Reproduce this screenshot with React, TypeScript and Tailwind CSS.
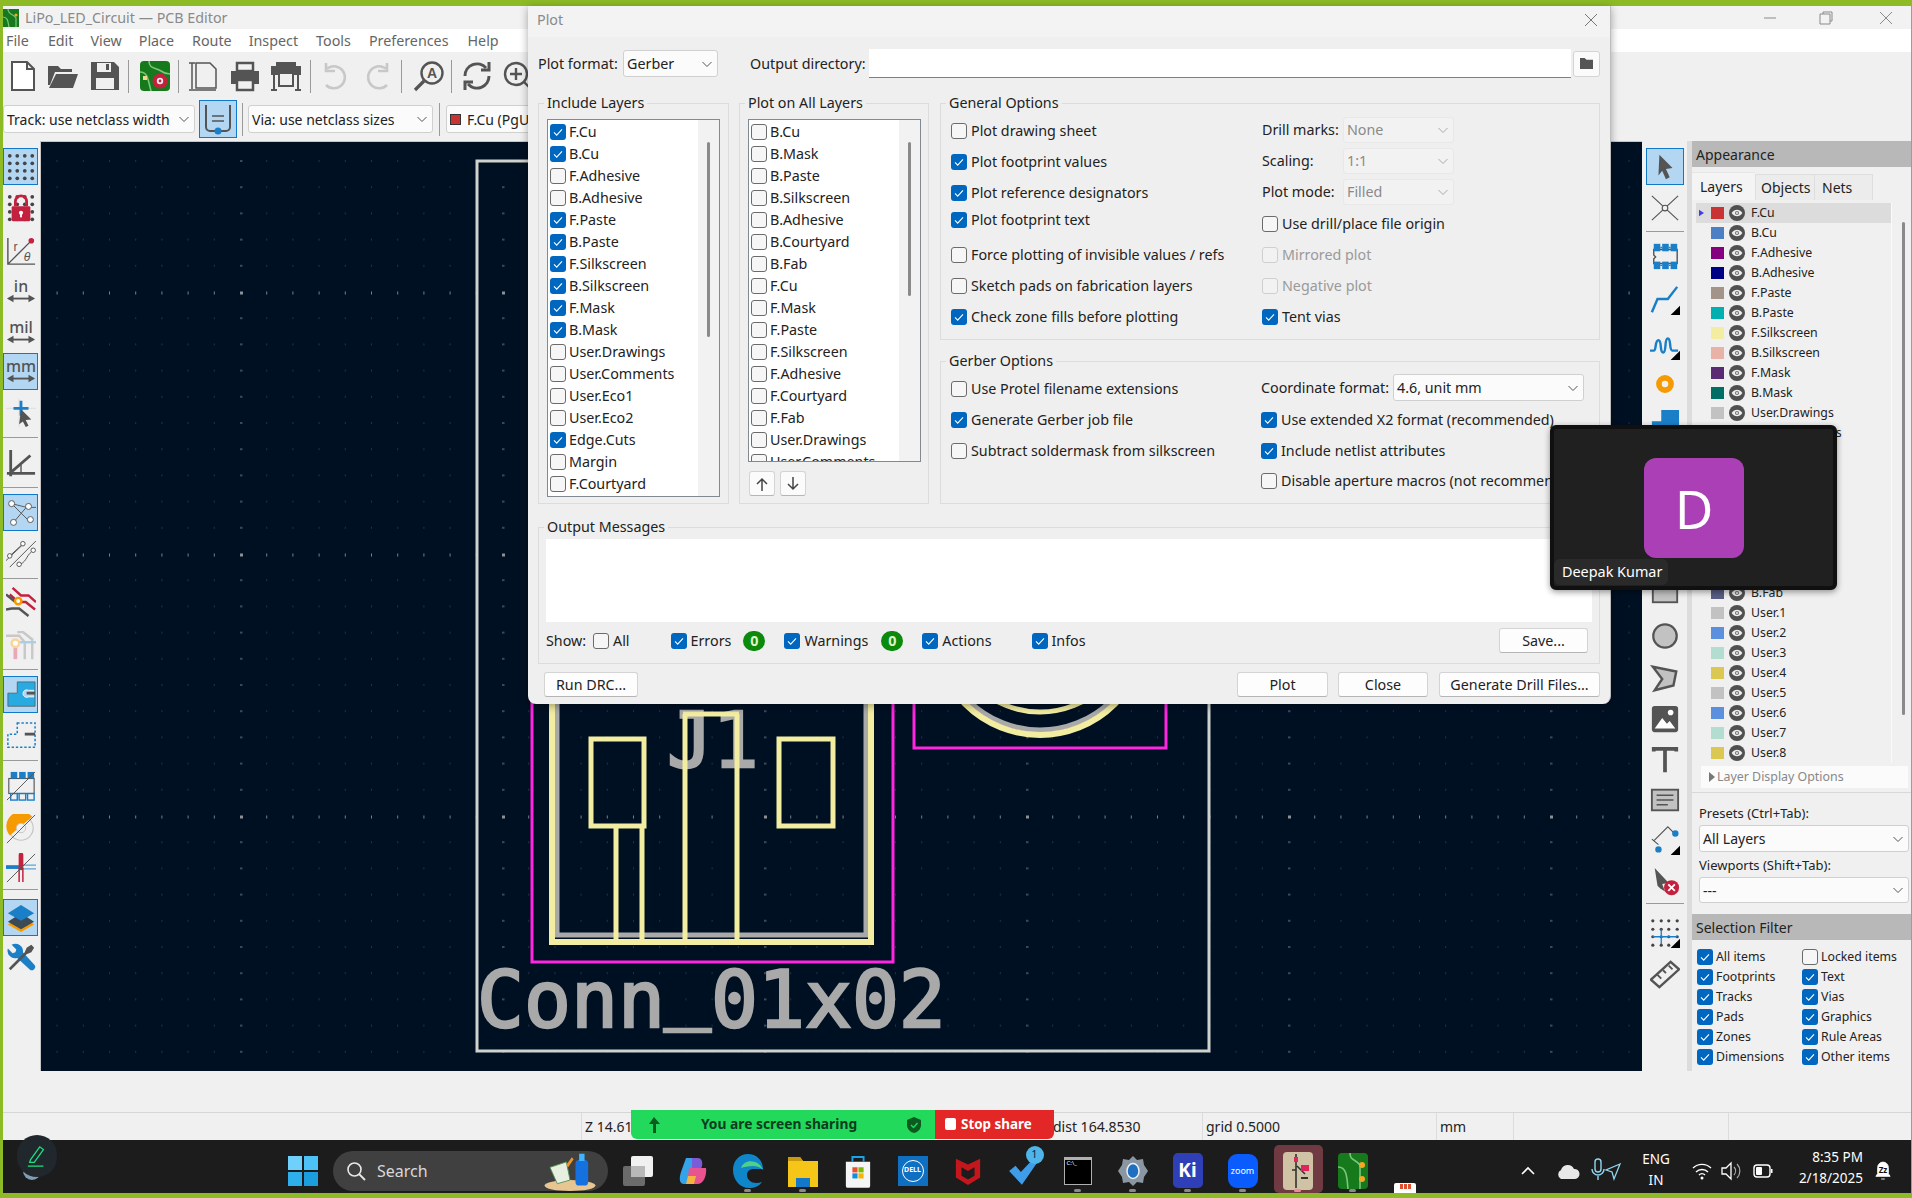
import React from "react";

const G = "#545454";
const B = "#1a7fc7";

function Check() {
  return (
    <svg viewBox="0 0 16 16" className="w-[16px] h-[16px]">
      <path d="M4 8.4l2.7 2.7L12 5.4" fill="none" stroke="#fff" strokeWidth="1.1" />
    </svg>
  );
}

function Cb({ on = false, off = false }: { on?: boolean; off?: boolean }) {
  if (on)
    return (
      <span className="w-[16px] h-[16px] rounded-[3px] bg-[#0067c0] shrink-0 block">
        <Check />
      </span>
    );
  return (
    <span
      className={
        off
          ? "w-[16px] h-[16px] rounded-[3px] border border-[#cfcfcf] bg-[#f2f2f2] shrink-0 block"
          : "w-[16px] h-[16px] rounded-[3px] border border-[#6b6b6b] bg-[#f6f6f6] shrink-0 block"
      }
    />
  );
}

function Opt({ label, on, off, cls = "" }: { label: string; on?: boolean; off?: boolean; cls?: string }) {
  return (
    <div className={"flex items-center h-[18px] gap-[4px] whitespace-nowrap " + cls}>
      <Cb on={on} off={off} />
      <span className={off ? "text-[#9a9a9a]" : "text-[#222]"}>{label}</span>
    </div>
  );
}

function Chev({ c = "#555" }: { c?: string }) {
  return (
    <svg viewBox="0 0 12 12" className="w-[12px] h-[12px] shrink-0">
      <path d="M1.5 4l4.5 4.5L10.5 4" fill="none" stroke={c} strokeWidth="1" />
    </svg>
  );
}

function Select({ text, cls, off }: { text: React.ReactNode; cls: string; off?: boolean }) {
  return (
    <div
      className={
        "flex items-center justify-between pl-[3px] pr-[4px] rounded-[3px] border shrink-0 whitespace-nowrap overflow-hidden " +
        (off ? "border-[#e8e8e8] bg-[#f2f2f2] text-[#8a8a8a] " : "border-[#d0d0d0] bg-[#fbfbfb] text-[#222] ") +
        cls
      }
    >
      <span className="flex items-center gap-[6px]">{text}</span>
      <Chev c={off ? "#aaa" : "#555"} />
    </div>
  );
}

function Btn({ label, cls }: { label: string; cls: string }) {
  return (
    <div
      className={
        "flex items-center justify-center h-[25px] rounded-[3px] border border-[#d4d4d4] border-b-[#b5b5b5] bg-[#fdfdfd] text-[#222] shrink-0 whitespace-nowrap " +
        cls
      }
    >
      {label}
    </div>
  );
}

function Group({ title, cls, children }: { title: string; cls: string; children: React.ReactNode }) {
  return (
    <div className={"relative border border-[#dcdcdc] shrink-0 " + cls}>
      <span className="absolute left-[5px] top-[-10px] px-[3px] bg-[#efefef] text-[#222] whitespace-nowrap">{title}</span>
      {children}
    </div>
  );
}

const inc: [string, boolean][] = [
  ["F.Cu", true], ["B.Cu", true], ["F.Adhesive", false], ["B.Adhesive", false], ["F.Paste", true], ["B.Paste", true],
  ["F.Silkscreen", true], ["B.Silkscreen", true], ["F.Mask", true], ["B.Mask", true], ["User.Drawings", false],
  ["User.Comments", false], ["User.Eco1", false], ["User.Eco2", false], ["Edge.Cuts", true], ["Margin", false], ["F.Courtyard", false],
];
const all = ["B.Cu", "B.Mask", "B.Paste", "B.Silkscreen", "B.Adhesive", "B.Courtyard", "B.Fab", "F.Cu", "F.Mask", "F.Paste", "F.Silkscreen", "F.Adhesive", "F.Courtyard", "F.Fab", "User.Drawings", "User.Comments"];

const layers: [string, string][] = [
  ["F.Cu", "#c83434"], ["B.Cu", "#4d7fc4"], ["F.Adhesive", "#84007f"], ["B.Adhesive", "#000084"], ["F.Paste", "#a29489"],
  ["B.Paste", "#00b0b0"], ["F.Silkscreen", "#f2eda1"], ["B.Silkscreen", "#e8b2a7"], ["F.Mask", "#5a2a72"], ["B.Mask", "#006e64"],
  ["User.Drawings", "#c2c2c2"], ["User.Comments", "#597ed1"], ["User.Eco1", "#b2ddd0"], ["User.Eco2", "#dbc852"], ["Edge.Cuts", "#d0d2cd"],
  ["Margin", "#ff26e2"], ["F.Courtyard", "#ff26e2"], ["B.Courtyard", "#26e9ff"], ["F.Fab", "#afafaf"], ["B.Fab", "#585d84"],
  ["User.1", "#c2c2c2"], ["User.2", "#5a90dd"], ["User.3", "#b2ddd0"], ["User.4", "#dbc852"], ["User.5", "#c2c2c2"],
  ["User.6", "#5a90dd"], ["User.7", "#b2ddd0"], ["User.8", "#dbc852"],
];

function Eye() {
  return (
    <svg viewBox="0 0 16 16" className="w-[16px] h-[16px] shrink-0">
      <circle cx="8" cy="8" r="8" fill="#505050" />
      <path d="M2.6 8C4.2 5.6 6 4.8 8 4.8s3.8.8 5.4 3.2C11.8 10.4 10 11.2 8 11.2S4.2 10.4 2.6 8z" fill="#eee" />
      <circle cx="8" cy="8" r="2.1" fill="#777" />
      <circle cx="8" cy="8" r="1" fill="#eee" />
    </svg>
  );
}

function I({ children, s = 32 }: { children: React.ReactNode; s?: number }) {
  return (
    <svg viewBox="0 0 32 32" width={s} height={s} className="shrink-0 block">
      {children}
    </svg>
  );
}

const Sep = () => <div className="w-[1px] h-[33px] bg-[#9a9a9a] shrink-0" />;

const iNew = <path d="M5 2h15l7 7v21H5z M20 2v7h7" fill="#fff" stroke={G} strokeWidth="2" />;
const iOpen = (
  <g fill={G}>
    <path d="M1 6h10l3 3h11v3H8L3 25H1z" />
    <path d="M9 14h22l-5 14H2z" />
  </g>
);
const iSave = (
  <g>
    <path d="M2 2h23l5 5v23H2z" fill={G} />
    <rect x="8" y="3" width="14" height="9" fill="#f0f0f0" />
    <rect x="17" y="4" width="3" height="6" fill={G} />
    <rect x="7" y="18" width="18" height="11" fill="#f0f0f0" />
  </g>
);
const iBoard = (
  <g>
    <rect x="1" y="1" width="30" height="30" rx="4" fill="#167a1c" />
    <path d="M10 1c0 8 6 6 12 10 4 3 6 3 9 3M1 12c8 0 8 8 11 19" fill="none" stroke="#7cc47f" strokeWidth="1.6" />
    <rect x="4" y="16" width="4" height="4" fill="#f5d58a" />
    <circle cx="21" cy="21" r="7.5" fill="#c4213f" />
    <circle cx="21" cy="21" r="3.2" fill="#eee" />
    <circle cx="21" cy="21" r="1.4" fill="#c4213f" />
  </g>
);
const iPage = (
  <g fill="#f0f0f0" stroke={G} strokeWidth="1.5">
    <path d="M9 3h14l6 6v19H9z" />
    <path d="M5 3v26M2 3h6M2 30h27" />
  </g>
);
const iPrint = (
  <g>
    <path d="M8 3h16v8H8z" fill="none" stroke={G} strokeWidth="2.5" />
    <path d="M2 11h28v13h-5v-5H7v5H2z" fill={G} />
    <path d="M8 20h16v10H8z" fill="#f0f0f0" stroke={G} strokeWidth="2.5" />
  </g>
);
const iPlot = (
  <g>
    <rect x="1" y="6" width="30" height="9" fill={G} />
    <rect x="6" y="2" width="20" height="4" fill={G} />
    <path d="M9 13h14v13H9z" fill="#f0f0f0" stroke={G} strokeWidth="2" />
    <path d="M4 15v15M28 15v15M1 30h6M25 30h6" stroke={G} strokeWidth="2" />
  </g>
);
const iUndo = <path d="M8 8h1A11 11 0 1 1 7 25M7 3v8h9" fill="none" stroke="#c8c8c8" strokeWidth="2.6" />;
const iRedo = <path d="M24 8h-1A11 11 0 1 0 25 25M25 3v8h-9" fill="none" stroke="#c8c8c8" strokeWidth="2.6" />;
const iSearch = (
  <g>
    <circle cx="19" cy="13" r="10.5" fill="none" stroke={G} strokeWidth="2.4" />
    <path d="M11 21L2 30" stroke={G} strokeWidth="3.2" />
    <text x="19" y="18" textAnchor="middle" fontSize="14" fontWeight="700" fill={G} fontFamily="'Liberation Sans',sans-serif">A</text>
  </g>
);
const iRefresh = (
  <g fill="none" stroke={G} strokeWidth="3">
    <path d="M4 16A12 12 0 0 1 25 8" />
    <path d="M28 16A12 12 0 0 1 7 24" />
    <path d="M28 2v8h-8M4 30v-8h8" />
  </g>
);
const iZoom = (
  <g fill="none" stroke={G} strokeWidth="2.4">
    <circle cx="14" cy="14" r="11" />
    <path d="M14 8v12M8 14h12M22 22l8 8" />
  </g>
);
const iDots = (
  <g fill="#454545">
    {[4, 12, 20, 28].map((y) => [4, 12, 20, 28].map((x) => <circle key={x + "-" + y} cx={x} cy={y} r="2" />))}
  </g>
);
const iLock = (
  <g>
    {iDots}
    <rect x="6" y="14" width="20" height="16" rx="1.5" fill="#c4213f" />
    <path d="M10 14V9a6 6 0 0 1 12 0v5" fill="none" stroke="#c4213f" strokeWidth="3" />
    <circle cx="16" cy="21" r="2.2" fill="#fff" />
    <rect x="15" y="21" width="2" height="5" fill="#fff" />
  </g>
);
const iPolar = (
  <g>
    <path d="M2 2v28h29M2 30L26 6" fill="none" stroke={G} strokeWidth="1.5" />
    <circle cx="27" cy="5" r="3" fill="#c4213f" />
    <text x="8" y="16" fontSize="13" fill={G} fontFamily="'Liberation Sans',sans-serif">r</text>
    <text x="19" y="27" fontSize="13" fontStyle="italic" fill={G} fontFamily="'Liberation Sans',sans-serif">θ</text>
  </g>
);
const unit = (u: string, fs: number) => (
  <g>
    <text x="16" y="16" textAnchor="middle" fontSize={fs} fontWeight="500" fill={G} fontFamily="'Noto Sans',sans-serif">{u}</text>
    <path d="M3 23h26" stroke={G} strokeWidth="2" />
    <path d="M1 23l7-4v8zM31 23l-7-4v8z" fill={G} />
  </g>
);
const iCursor = (
  <g>
    <path d="M14 1v30M0 11h32" stroke="#ddd" strokeWidth="1" />
    <path d="M8 11h16M16 3v16" stroke={B} strokeWidth="3" />
    <path d="M16 12l11 11-6 .5 3 6-3 1.5-3-6-4 3z" fill={G} />
  </g>
);
const iAngle = (
  <g fill="none" stroke={G} strokeWidth="3">
    <path d="M5 2v28M1 27h30M4 27L26 8" />
    <path d="M16 27v-9" strokeWidth="1.5" />
  </g>
);
const iNet = (
  <g stroke={G} strokeWidth="1" fill="#fff">
    <path d="M6 6l20 5M25 6L8 26M6 6l19 19M26 10h6" fill="none" />
    <circle cx="6" cy="6" r="3.2" />
    <circle cx="24" cy="9" r="3.2" />
    <circle cx="8" cy="26" r="3.2" />
    <circle cx="26" cy="23" r="3.2" />
  </g>
);
const iCurved = (
  <g fill="none" stroke={G} strokeWidth="1">
    <path d="M0 23L20 4M4 30L32 2" />
    <path d="M3 19l13-12M13 27c8 0 9-10 14-13" />
    <circle cx="4" cy="18" r="2.4" fill="#fff" />
    <circle cx="18" cy="5" r="2.4" fill="#fff" />
    <circle cx="14" cy="27" r="2.4" fill="#fff" />
    <circle cx="29" cy="12" r="2.4" fill="#fff" />
  </g>
);
const iTracks = (
  <g fill="none" strokeWidth="2.6">
    <path d="M7 1l9 8h8l8 7M4 8l9 8h8l10 8" stroke="#c4213f" />
    <path d="M0 8l10 8M0 24l6-1h8l10 8" stroke={G} />
    <circle cx="13" cy="15" r="3.4" stroke="#f59a00" fill="#fff" />
  </g>
);
const iTracks2 = (
  <g fill="none" strokeWidth="2.6">
    <path d="M0 5h14l6 7v18M12 1h6l10 8v21" stroke="#c8c8c8" />
    <path d="M10 12h22" stroke="#a8cfe8" />
    <path d="M10 16v14" stroke="#e8a9b5" strokeWidth="4" />
    <circle cx="10" cy="13" r="4" stroke="#fbd49a" fill="#fff" />
  </g>
);
const iZone = (
  <g>
    <path d="M12 2h19v26H2V14h10z" fill="#29abe2" stroke={G} strokeWidth="0.8" />
    <path d="M30 11h-6a4 4 0 1 0 0 7h6" fill="#b3d7f3" stroke="#e8f3fb" strokeWidth="1" />
    <path d="M22 14h9" stroke={G} strokeWidth="3" />
  </g>
);
const iZoneD = (
  <g>
    <path d="M12 2h19v26H2V14h10z" fill="none" stroke={B} strokeWidth="1.6" strokeDasharray="2.5 2" />
    <path d="M20 14h11" stroke={G} strokeWidth="3" />
  </g>
);
const fp = (
  <g>
    <path d="M4 9h25v15H4v-5l2-2-2-2z" fill="none" stroke={G} strokeWidth="1.5" />
    {[4, 13, 22].map((x) => <rect key={x} x={x} y="3" width="7" height="8" fill="#1a7fc7" />)}
    {[4, 13, 22].map((x) => <rect key={x} x={x} y="22" width="7" height="8" fill="#1a7fc7" />)}
    <path d="M11 7h2M20 7h2M11 26h2M20 26h2" stroke="#1a7fc7" strokeWidth="1.5" />
  </g>
);
const iFpOff = (
  <g>
    <rect x="3" y="8" width="27" height="16" fill="none" stroke={G} strokeWidth="1.2" />
    {[5, 14, 23].map((x) => <rect key={x} x={x} y="1" width="7" height="7" fill="#1a7fc7" />)}
    {[5, 14, 23].map((x) => <rect key={x} x={x} y="24" width="7" height="7" fill="none" stroke="#1a7fc7" strokeWidth="1.5" />)}
    <path d="M1 31L31 1" stroke={G} strokeWidth="1" />
  </g>
);
const iViaOff = (
  <g>
    <circle cx="16" cy="15" r="13" fill="#f0f0f0" stroke="#c4c4c4" strokeWidth="1.2" />
    <path d="M28 3A13 13 0 0 0 4 23z" fill="#f59a00" />
    <circle cx="16" cy="15" r="5" fill="#f0f0f0" stroke="#c4c4c4" />
    <path d="M1 31L31 1" stroke={G} strokeWidth="1" />
  </g>
);
const iTrkOff = (
  <g>
    <path d="M0 15h16" stroke="#1a7fc7" strokeWidth="4" />
    <path d="M16 13h16M16 17h16" stroke="#5aa5d8" strokeWidth="1.4" />
    <path d="M16 2v14" stroke="#c4213f" strokeWidth="5" strokeLinecap="round" />
    <path d="M14 16v15M18 16v15" stroke="#c4213f" strokeWidth="1.6" />
    <path d="M1 31L31 1" stroke={G} strokeWidth="1" />
  </g>
);
const iLayers = (
  <g>
    <path d="M16 17l14 9-14 8-14-8z" fill="#f59a00" transform="translate(0 -3)" />
    <path d="M16 11l14 9-14 8-14-8z" fill="#3c4a55" />
    <path d="M16 2l14 9-14 8-14-8z" fill="#1a7fc7" />
  </g>
);
const iTools = (
  <g>
    <path d="M6 3l5 5-1 3-3 1-5-5a8 8 0 0 0 10 10L25 29a3 3 0 0 0 5-5L18 11A8 8 0 0 0 6 3z" fill="#1a7fc7" />
    <path d="M30 6l-3-3-5 3-2 5-17 17 2 2 17-17 5-2z" fill={G} />
  </g>
);
const corner = (k: React.ReactNode) => (
  <g>
    {k}
    <path d="M32 32H22l10-10z" fill="#000" />
  </g>
);
const iSel = <path d="M10 3l14 14-7 1 4 9-4 2-4-9-4 5z" fill={G} />;
const iCross = (
  <g fill="none" stroke={G} strokeWidth="1.2">
    <path d="M2 3l28 26M30 3L2 29" />
    <circle cx="16" cy="16" r="3" fill="#f0f0f0" />
  </g>
);
const iTrack = corner(<path d="M2 29l6-14h11L29 2" fill="none" stroke="#1a7fc7" strokeWidth="2.6" />);
const iTune = corner(
  <path d="M0 22h4c3 0 1-11 5-11s1 13 5 13 1-15 5-15 1 13 5 13h6" fill="none" stroke="#1a7fc7" strokeWidth="2.6" />
);
const iVia = <circle cx="16" cy="16" r="6.5" fill="none" stroke="#f59a00" strokeWidth="6" />;
const iRect = <rect x="3" y="4" width="26" height="24" fill="#c2c2c2" stroke={G} strokeWidth="2" />;
const iCircle = <circle cx="16" cy="16" r="12.5" fill="#c2c2c2" stroke={G} strokeWidth="2.4" />;
const iPoly = <path d="M3 4l25 5-3 15-20 5 8-12z" fill="#c2c2c2" stroke={G} strokeWidth="2.6" />;
const iImage = (
  <g>
    <rect x="2" y="2" width="28" height="28" rx="3" fill={G} />
    <circle cx="22" cy="9" r="3" fill="#fff" />
    <path d="M5 26l8-11 5 6 3-3 6 8z" fill="#fff" />
  </g>
);
const iText = <path d="M4 7V4h24v3M16 4v25" fill="none" stroke={G} strokeWidth="4" />;
const iTextbox = (
  <g>
    <rect x="2" y="5" width="28" height="22" fill="#c2c2c2" stroke={G} strokeWidth="2" />
    <path d="M7 11h18M7 16h18M7 21h12" stroke={G} strokeWidth="1.5" />
  </g>
);
const iLine = corner(
  <g>
    <path d="M4 17L19 2l7 7M2 15l7 6" fill="none" stroke={G} strokeWidth="1.2" />
    <circle cx="27" cy="9" r="3.4" fill="#1a7fc7" />
    <circle cx="9" cy="26" r="3.4" fill="#1a7fc7" />
  </g>
);
const iDel = (
  <g>
    <path d="M5 1l15 16-7 1 3 8-5-3-3-3z" fill={G} />
    <circle cx="23" cy="22" r="8" fill="#c4213f" />
    <path d="M19.5 18.5l7 7M26.5 18.5l-7 7" stroke="#fff" strokeWidth="2" />
  </g>
);
const iGrid = corner(
  <g>
    <g fill="#454545">
      {[3, 12, 20, 29].map((y) => [3, 12, 20, 29].map((x) => <circle key={x + "-" + y} cx={x} cy={y} r="1.7" />))}
    </g>
    <path d="M3 20h26M12 12v16" stroke="#1a7fc7" strokeWidth="1.4" />
  </g>
);
const iRuler = (
  <g>
    <path d="M1 22L22 3l9 8-21 19z" fill="#f0f0f0" stroke={G} strokeWidth="2.6" />
    <path d="M8 17l4 4M14 12l3 3M20 7l4 4" stroke={G} strokeWidth="2" />
  </g>
);

type Item = { k: "sep" | "pad" | "i"; h: string; icon?: React.ReactNode; active?: boolean };
const leftItems: Item[] = [
  { k: "pad", h: "h-[6px]" },
  { k: "i", h: "h-[37px]", icon: iDots, active: true },
  { k: "i", h: "h-[45px]", icon: iLock },
  { k: "i", h: "h-[41px]", icon: iPolar },
  { k: "i", h: "h-[41px]", icon: unit("in", 17) },
  { k: "i", h: "h-[41px]", icon: unit("mil", 17) },
  { k: "i", h: "h-[37px]", icon: unit("mm", 17), active: true },
  { k: "i", h: "h-[46px]", icon: iCursor },
  { k: "sep", h: "h-[3px]" },
  { k: "i", h: "h-[47px]", icon: iAngle },
  { k: "sep", h: "h-[3px]" },
  { k: "pad", h: "h-[5px]" },
  { k: "i", h: "h-[37px]", icon: iNet, active: true },
  { k: "i", h: "h-[46px]", icon: iCurved },
  { k: "sep", h: "h-[3px]" },
  { k: "i", h: "h-[44px]", icon: iTracks },
  { k: "i", h: "h-[44px]", icon: iTracks2 },
  { k: "sep", h: "h-[3px]" },
  { k: "pad", h: "h-[5px]" },
  { k: "i", h: "h-[37px]", icon: iZone, active: true },
  { k: "i", h: "h-[46px]", icon: iZoneD },
  { k: "sep", h: "h-[3px]" },
  { k: "i", h: "h-[48px]", icon: iFpOff },
  { k: "i", h: "h-[38px]", icon: iViaOff },
  { k: "i", h: "h-[40px]", icon: iTrkOff },
  { k: "sep", h: "h-[3px]" },
  { k: "pad", h: "h-[8px]" },
  { k: "i", h: "h-[37px]", icon: iLayers, active: true },
  { k: "i", h: "h-[42px]", icon: iTools },
];
const rightItems: Item[] = [
  { k: "pad", h: "h-[6px]" },
  { k: "i", h: "h-[37px]", icon: iSel, active: true },
  { k: "i", h: "h-[45px]", icon: iCross },
  { k: "sep", h: "h-[3px]" },
  { k: "i", h: "h-[46px]", icon: fp },
  { k: "i", h: "h-[42px]", icon: iTrack },
  { k: "i", h: "h-[48px]", icon: iTune },
  { k: "i", h: "h-[30px]", icon: iVia },
  { k: "i", h: "h-[48px]", icon: <path d="M12 2h19v26H2V14h10z" fill="#1a7fc7" /> },
  { k: "i", h: "h-[43px]", icon: <rect x="3" y="4" width="26" height="24" fill="#c2c2c2" stroke={G} strokeWidth="2" /> },
  { k: "i", h: "h-[41px]", icon: <circle cx="16" cy="16" r="10" fill="#c2c2c2" /> },
  { k: "i", h: "h-[40px]", icon: <rect x="3" y="4" width="26" height="24" fill="#c2c2c2" /> },
  { k: "i", h: "h-[40px]", icon: iRect },
  { k: "pad", h: "h-[5px]" },
  { k: "i", h: "h-[40px]", icon: iCircle },
  { k: "i", h: "h-[44px]", icon: iPoly },
  { k: "i", h: "h-[38px]", icon: iImage },
  { k: "i", h: "h-[44px]", icon: iText },
  { k: "i", h: "h-[36px]", icon: iTextbox },
  { k: "i", h: "h-[44px]", icon: iLine },
  { k: "i", h: "h-[40px]", icon: iDel },
  { k: "sep", h: "h-[3px]" },
  { k: "pad", h: "h-[2px]" },
  { k: "i", h: "h-[52px]", icon: iGrid },
  { k: "i", h: "h-[30px]", icon: iRuler },
];

function ToolCol({ items, w, pad }: { items: Item[]; w: string; pad: string }) {
  return (
    <div className={"flex flex-col shrink-0 bg-[#f0f0f0] overflow-hidden " + w + " " + pad}>
      {items.map((it, i) => {
        if (it.k === "pad") return <div key={i} className={it.h + " shrink-0"} />;
        if (it.k === "sep")
          return (
            <div key={i} className={it.h + " shrink-0 flex items-center"}>
              <div className="w-full h-[1px] bg-[#9a9a9a]" />
            </div>
          );
        return (
          <div
            key={i}
            className={
              it.h +
              " shrink-0 flex items-center justify-center " +
              (it.active ? "bg-[#b3d7f3] border border-[#0f78c8]" : "")
            }
          >
            <I s={30}>{it.icon}</I>
          </div>
        );
      })}
    </div>
  );
}

function Canvas() {
  const step = 26.2;
  const idx = [0, 1, 2, 3, 4, 5, 6, 7, 8, 9];
  const silk = "#f2eda1";
  const ink = "#a9a9a9";
  return (
    <div className="flex-1 h-full bg-[#001023] border-l border-t border-[#c6c6c6] overflow-hidden">
      <svg viewBox="41 142 1601 929" className="w-full h-full block">
        <defs>
          <pattern id="grid" x="240" y="291.5" width="262" height="262" patternUnits="userSpaceOnUse">
            {idx.map((j) =>
              idx.map((i) => {
                const x = i * step;
                const y = j * step;
                if (i === 0 && j === 0) return <rect key="c" x={0} y={0} width="3" height="3" fill="#8a9096" />;
                if (i === 0) return <rect key={"a" + j} x={-0.5} y={y} width="3" height="1" fill="#76808a" />;
                if (j === 0) return <rect key={"b" + i} x={x} y={0} width="1" height="3" fill="#76808a" />;
                return <rect key={i + "_" + j} x={x} y={y} width="1" height="1" fill="#45535f" />;
              })
            )}
          </pattern>
        </defs>
        <rect x="41" y="142" width="1601" height="929" fill="url(#grid)" />
        <rect x="477" y="161" width="732" height="890" fill="none" stroke="#d0d2cd" strokeWidth="3" />
        <rect x="532" y="600" width="361" height="362" fill="none" stroke="#ff26e2" strokeWidth="3" />
        <rect x="914" y="600" width="252" height="148" fill="none" stroke="#ff26e2" strokeWidth="3" />
        <text x="667" y="767" fontSize="76" fill={ink} stroke={ink} strokeWidth="2.5" fontFamily="'DejaVu Sans Mono',monospace">J1</text>
        <circle cx="1040" cy="629" r="101" fill="none" stroke={ink} strokeWidth="5" />
        <circle cx="1040" cy="629" r="106" fill="none" stroke={silk} strokeWidth="6" />
        <circle cx="1040" cy="620" r="92" fill="none" stroke={silk} strokeWidth="5" />
        <path d="M557 650V935H866V650" fill="none" stroke={ink} strokeWidth="5" />
        <path d="M552 650V942H871V650" fill="none" stroke={silk} strokeWidth="6" />
        <rect x="591" y="739" width="53" height="87" fill="none" stroke={silk} strokeWidth="5" />
        <rect x="779" y="739" width="54" height="87" fill="none" stroke={silk} strokeWidth="5" />
        <path d="M616 826V940M642 826V940M685 714V940M737 714V940M683 714H739" fill="none" stroke={silk} strokeWidth="5" />
        <text y="1027" fontSize="78" fill={ink} stroke={ink} strokeWidth="2.5" fontFamily="'DejaVu Sans Mono',monospace">
          <tspan x="477">Conn</tspan>
          <tspan x="664" dy="-14">_</tspan>
          <tspan x="711" dy="14">01x02</tspan>
        </text>
      </svg>
    </div>
  );
}

function Dialog() {
  return (
    <div className="absolute left-[528px] top-[6px] w-[1083px] h-[698px] bg-[#efefef] rounded-b-[8px] border-r border-[#bdbdbd] shadow-[0_2px_8px_rgba(0,0,0,0.35)] text-[14.3px] leading-[18px] overflow-hidden font-['Noto_Sans',sans-serif]">
      <div className="h-[31px] bg-[#f3f3f3] flex items-center justify-between pl-[9px] pr-[12px] pb-[3px] text-[#8a8a8a]">
        <span>Plot</span>
        <svg viewBox="0 0 14 14" className="w-[14px] h-[14px]">
          <path d="M1 1l12 12M13 1L1 13" stroke="#777" strokeWidth="1" />
        </svg>
      </div>
      <div className="flex items-center pl-[10px] mt-[12px] h-[29px]">
        <span className="w-[85px] text-[#222]">Plot format:</span>
        <Select text="Gerber" cls="w-[95px] h-[27px]" />
        <span className="ml-[32px] w-[119px] text-[#222] whitespace-nowrap">Output directory:</span>
        <div className="w-[702px] h-[29px] bg-white border-b border-[#808080] shrink-0" />
        <div className="ml-[2px] w-[27px] h-[26px] rounded-[3px] border border-[#d4d4d4] bg-[#fbfbfb] flex items-center justify-center shrink-0">
          <svg viewBox="0 0 16 14" className="w-[15px] h-[13px]">
            <path d="M1 1h5l2 2h7v10H1z" fill="#555" />
          </svg>
        </div>
      </div>
      <div className="flex pl-[10px] mt-[25px]">
        <Group title="Include Layers" cls="w-[191px] h-[401px] pl-[8px] pt-[15px]">
          <div className="relative w-[173px] h-[378px] bg-white border border-[#808a90] overflow-hidden flex">
            <div className="flex-1 pl-[2px] pt-[1px]">
              {inc.map(([n, on]) => (
                <div key={n} className="flex items-center h-[22px] gap-[3px] whitespace-nowrap text-[#222]">
                  <Cb on={on} />
                  <span>{n}</span>
                </div>
              ))}
            </div>
            <div className="w-[21px] bg-[#f2f2f2] flex justify-center pt-[22px]">
              <div className="w-[3px] h-[195px] bg-[#8a8a8a] rounded-full" />
            </div>
          </div>
        </Group>
        <Group title="Plot on All Layers" cls="ml-[10px] w-[190px] h-[401px] pl-[8px] pt-[15px]">
          <div className="w-[173px] h-[343px] bg-white border border-[#808a90] overflow-hidden flex">
            <div className="flex-1 pl-[2px] pt-[1px]">
              {all.map((n) => (
                <div key={n} className="flex items-center h-[22px] gap-[3px] whitespace-nowrap text-[#222]">
                  <Cb />
                  <span>{n}</span>
                </div>
              ))}
            </div>
            <div className="w-[21px] bg-[#f2f2f2] flex justify-center pt-[22px]">
              <div className="w-[3px] h-[154px] bg-[#8a8a8a] rounded-full" />
            </div>
          </div>
          <div className="flex gap-[5px] mt-[9px] pl-[1px]">
            {["M7 14V2M2 7l5-5 5 5", "M7 0v12M2 7l5 5 5-5"].map((d) => (
              <div key={d} className="w-[26px] h-[25px] rounded-[3px] border border-[#d4d4d4] border-b-[#b5b5b5] bg-[#fbfbfb] flex items-center justify-center">
                <svg viewBox="0 0 14 14" className="w-[14px] h-[14px]">
                  <path d={d} fill="none" stroke="#444" strokeWidth="1.5" />
                </svg>
              </div>
            ))}
          </div>
        </Group>
        <div className="ml-[11px] w-[660px] flex flex-col">
          <Group title="General Options" cls="h-[237px] flex">
            <div className="w-[321px] pl-[10px] pt-[18px] flex flex-col">
              <Opt label="Plot drawing sheet" />
              <Opt label="Plot footprint values" on cls="mt-[13px]" />
              <Opt label="Plot reference designators" on cls="mt-[13px]" />
              <Opt label="Plot footprint text" on cls="mt-[9px]" />
              <Opt label="Force plotting of invisible values / refs" cls="mt-[17px]" />
              <Opt label="Sketch pads on fabrication layers" cls="mt-[13px]" />
              <Opt label="Check zone fills before plotting" on cls="mt-[13px]" />
            </div>
            <div className="pt-[13px] flex flex-col">
              {[["Drill marks:", "None"], ["Scaling:", "1:1"], ["Plot mode:", "Filled"]].map(([l, v], i) => (
                <div key={l} className={"flex items-center h-[26px] " + (i ? "mt-[5px]" : "")}>
                  <span className="w-[81px] text-[#222]">{l}</span>
                  <Select text={v} off cls="w-[111px] h-[26px]" />
                </div>
              ))}
              <Opt label="Use drill/place file origin" cls="mt-[10px]" />
              <Opt label="Mirrored plot" off cls="mt-[13px]" />
              <Opt label="Negative plot" off cls="mt-[13px]" />
              <Opt label="Tent vias" on cls="mt-[13px]" />
            </div>
          </Group>
          <Group title="Gerber Options" cls="mt-[21px] h-[143px] flex">
            <div className="w-[320px] pl-[10px] pt-[18px] flex flex-col">
              <Opt label="Use Protel filename extensions" />
              <Opt label="Generate Gerber job file" on cls="mt-[13px]" />
              <Opt label="Subtract soldermask from silkscreen" cls="mt-[13px]" />
            </div>
            <div className="pt-[12px] flex flex-col">
              <div className="flex items-center h-[27px]">
                <span className="w-[132px] text-[#222] whitespace-nowrap">Coordinate format:</span>
                <Select text="4.6, unit mm" cls="w-[191px] h-[27px]" />
              </div>
              <Opt label="Use extended X2 format (recommended)" on cls="mt-[10px]" />
              <Opt label="Include netlist attributes" on cls="mt-[13px]" />
              <Opt label="Disable aperture macros (not recommended)" cls="mt-[12px]" />
            </div>
          </Group>
        </div>
      </div>
      <Group title="Output Messages" cls="ml-[10px] mt-[23px] w-[1062px] h-[137px] pl-[7px] pr-[7px] pt-[11px]">
        <div className="h-[83px] bg-white" />
        <div className="flex items-center h-[25px] mt-[6px] text-[#222]">
          <span className="w-[47px]">Show:</span>
          <Opt label="All" />
          <Opt label="Errors" on cls="ml-[41px]" />
          <span className="ml-[12px] w-[22px] h-[20px] rounded-full bg-[#0b8a0b] text-[#dff5c8] flex items-center justify-center font-bold">0</span>
          <Opt label="Warnings" on cls="ml-[19px]" />
          <span className="ml-[13px] w-[22px] h-[20px] rounded-full bg-[#0b8a0b] text-[#dff5c8] flex items-center justify-center font-bold">0</span>
          <Opt label="Actions" on cls="ml-[19px]" />
          <Opt label="Infos" on cls="ml-[40px]" />
          <div className="flex-1" />
          <Btn label="Save..." cls="w-[89px] mr-[4px]" />
        </div>
      </Group>
      <div className="flex items-center pl-[16px] mt-[8px]">
        <Btn label="Run DRC..." cls="w-[94px]" />
        <div className="w-[599px]" />
        <Btn label="Plot" cls="w-[91px]" />
        <Btn label="Close" cls="ml-[10px] w-[90px]" />
        <Btn label="Generate Drill Files..." cls="ml-[11px] w-[161px]" />
      </div>
    </div>
  );
}

function Slot({ children, dot, active }: { children: React.ReactNode; dot?: boolean; active?: boolean }) {
  return (
    <div className="relative w-[55px] h-[53px] flex items-center justify-center shrink-0">
      {active && <div className="absolute left-[4px] top-[5px] w-[49px] h-[48px] rounded-[5px] bg-[#6f3a42]" />}
      <div className="relative mt-[8px]">{children}</div>
      {dot && <div className={"absolute bottom-[1px] left-[24px] w-[7px] h-[3px] rounded-full " + (active ? "bg-[#f08a9a]" : "bg-[#8a8a8a]")} />}
    </div>
  );
}

function Taskbar() {
  return (
    <div className="relative h-[53px] bg-[#1c1c1c] flex items-center text-white shrink-0 font-['Noto_Sans',sans-serif]">
      <div className="absolute left-[20px] top-[30px] w-[18px] h-[10px] rounded-b-full bg-[#7f9db5]" />
      <div className="absolute left-[14px] top-[-5px] w-[40px] h-[42px] rounded-full bg-[#20272d] flex items-center justify-center">
        <svg viewBox="0 0 24 26" className="w-[22px] h-[26px]">
          <path d="M5 17L15 3l4 3L9 20H4z M2 24h17" fill="none" stroke="#1fe07f" strokeWidth="1.4" />
        </svg>
      </div>
      <div className="ml-[285px] mt-[8px] w-[30px] h-[30px] grid grid-cols-2 gap-[2px] shrink-0">
        <div className="bg-[#6fd0fb]" />
        <div className="bg-[#4cc2f7]" />
        <div className="bg-[#2eaeea]" />
        <div className="bg-[#1c9ede]" />
      </div>
      <div className="ml-[15px] mt-[8px] w-[275px] h-[40px] rounded-full bg-[#404040] flex items-center pl-[13px] shrink-0">
        <svg viewBox="0 0 20 20" className="w-[20px] h-[20px] shrink-0">
          <circle cx="8.5" cy="8.5" r="6.5" fill="none" stroke="#e8e8e8" strokeWidth="1.6" />
          <path d="M13 13l6 6" stroke="#e8e8e8" strokeWidth="1.8" />
        </svg>
        <span className="ml-[11px] text-[16px] text-[#d8d8d8]">Search</span>
        <svg viewBox="0 0 60 44" className="ml-[114px] w-[56px] h-[40px] shrink-0">
          <ellipse cx="30" cy="38" rx="28" ry="6" fill="#e8c692" />
          <path d="M8 18l18-6 4 20-14 4z" fill="#e6efe0" stroke="#5b8f5b" />
          <path d="M26 15l6-8 2 2-6 9z" fill="#e8952f" />
          <rect x="36" y="10" width="14" height="28" rx="4" fill="#1671e0" />
          <rect x="40" y="3" width="6" height="8" fill="#3fb4ff" />
        </svg>
      </div>
      <div className="ml-[2px] flex shrink-0">
        <Slot>
          <svg viewBox="0 0 30 30" className="w-[30px] h-[30px]">
            <rect x="0" y="10" width="22" height="20" rx="2" fill="#6b6b6b" />
            <rect x="8" y="0" width="22" height="21" rx="2" fill="#f0f0f0" />
            <rect x="8" y="10" width="14" height="11" fill="#b8b8b8" />
          </svg>
        </Slot>
        <Slot>
          <svg viewBox="0 0 30 30" className="w-[30px] h-[30px]">
            <path d="M8 2h8l-5 26H6C1 28 1 22 3 16z" fill="#35a3e8" />
            <path d="M14 2h6c3 0 5 3 4 8l-3 10-7-2z" fill="#7a5cd8" />
            <path d="M11 12h17c1 6-2 16-8 16H9z" fill="#e8548f" />
            <path d="M10 20h8l-2 8H8z" fill="#f5b342" />
          </svg>
        </Slot>
        <Slot dot>
          <svg viewBox="0 0 30 34" className="w-[30px] h-[34px]">
            <path d="M15 0C6 0 0 7 0 16c0 10 7 18 16 18 6 0 10-2 13-6-8 3-15-1-15-7 0-4 3-6 7-6h9C30 6 23 0 15 0z" fill="#0f86c9" />
            <path d="M8 14c2-6 8-8 14-6 4 1 7 5 8 8-3-3-6-4-10-4-5 0-9 1-12 2z" fill="#4fd08a" />
          </svg>
        </Slot>
        <Slot dot>
          <svg viewBox="0 0 30 32" className="w-[30px] h-[32px]">
            <path d="M0 2h12l3 4h15v26H0z" fill="#f5c518" />
            <path d="M0 2h12l3 4H0z" fill="#c99a0e" />
            <rect x="8" y="23" width="14" height="9" fill="#1478c8" />
          </svg>
        </Slot>
        <Slot>
          <svg viewBox="0 0 30 36" className="w-[28px] h-[34px]">
            <path d="M2 8h26v26a2 2 0 0 1-2 2H4a2 2 0 0 1-2-2z" fill="#f5f5f5" />
            <path d="M9 8V3h12v5" fill="none" stroke="#1ba3e8" strokeWidth="2" />
            <rect x="9" y="14" width="5.5" height="5.5" fill="#e8512f" />
            <rect x="15.5" y="14" width="5.5" height="5.5" fill="#7fba00" />
            <rect x="9" y="20.5" width="5.5" height="5.5" fill="#0f8fe0" />
            <rect x="15.5" y="20.5" width="5.5" height="5.5" fill="#f5b400" />
          </svg>
        </Slot>
        <Slot>
          <div className="w-[30px] h-[30px] bg-[#0f6fc0] flex items-center justify-center">
            <div className="w-[22px] h-[22px] rounded-full border border-white text-[7px] font-bold flex items-center justify-center">DELL</div>
          </div>
        </Slot>
        <Slot>
          <svg viewBox="0 0 30 32" className="w-[28px] h-[30px]">
            <path d="M2 3l13 6 13-6v20l-13 8-13-8z" fill="#c4171d" />
            <path d="M8 12l7 4 7-4v9l-7 4-7-4z" fill="#1c1c1c" />
          </svg>
        </Slot>
        <Slot>
          <div className="relative">
            <svg viewBox="0 0 30 30" className="w-[32px] h-[32px]">
              <path d="M2 15l6-5 5 6L26 2l3 4-15 22z" fill="#3f9ce8" />
            </svg>
            <span className="absolute left-[19px] top-[-9px] w-[18px] h-[18px] rounded-full bg-[#4db5ea] text-[11px] text-[#0e2a40] flex items-center justify-center">1</span>
          </div>
        </Slot>
        <Slot dot>
          <div className="w-[28px] h-[28px] bg-black border-t-[3px] border-[#b0b0b0] border-x border-b text-[6px] leading-[7px] pl-[2px]">C:\_</div>
        </Slot>
        <Slot dot>
          <svg viewBox="0 0 30 30" className="w-[30px] h-[30px]">
            <path d="M15 0l4 4 6-1 1 6 4 6-4 6-1 6-6-1-4 4-4-4-6 1-1-6-4-6 4-6 1-6 6 1z" fill="#8a97a3" />
            <ellipse cx="15" cy="15" rx="6" ry="7.5" fill="#1f6fc0" stroke="#e8eef3" strokeWidth="1.5" />
          </svg>
        </Slot>
        <Slot dot>
          <div className="w-[30px] h-[35px] rounded-[5px] bg-[#2f3fb8] text-[19px] font-bold flex items-center justify-center">Ki</div>
        </Slot>
        <Slot dot>
          <div className="w-[30px] h-[34px] rounded-[9px] bg-[#0b5cff] text-[9px] flex items-center justify-center">zoom</div>
        </Slot>
        <Slot dot active>
          <svg viewBox="0 0 30 38" className="w-[30px] h-[38px]">
            <rect width="30" height="38" rx="4" fill="#cfc2a5" />
            <path d="M13 2v34M13 18h-4M14 14l8 8" stroke="#333" strokeWidth="1.6" />
            <rect x="18" y="13" width="8" height="6" fill="#e0245e" />
            <rect x="11" y="5" width="4" height="5" fill="#e0245e" />
            <rect x="18" y="25" width="7" height="2" fill="#333" />
          </svg>
        </Slot>
        <Slot dot>
          <svg viewBox="0 0 30 36" className="w-[30px] h-[36px]">
            <rect width="30" height="36" rx="4" fill="#167a1c" />
            <path d="M12 0c0 8 6 6 10 12v24M0 14c8 0 9 8 10 22" fill="none" stroke="#7cc47f" strokeWidth="1.6" />
            <circle cx="24" cy="12" r="3" fill="#f5a623" />
            <circle cx="24" cy="26" r="3" fill="#f5a623" />
          </svg>
        </Slot>
      </div>
      <div className="w-[50px] h-[53px] flex items-end justify-center shrink-0">
        <div className="w-[22px] h-[10px] bg-white rounded-t-[2px] flex items-start justify-center gap-[1px] pt-[1px]">
          <span className="w-[3px] h-[5px] bg-[#e0502f]" />
          <span className="w-[3px] h-[5px] bg-[#e0502f]" />
          <span className="w-[3px] h-[5px] bg-[#e0502f]" />
        </div>
      </div>
      <svg viewBox="0 0 20 20" className="ml-[88px] mt-[8px] w-[20px] h-[20px] shrink-0">
        <path d="M4 13l6-6 6 6" fill="none" stroke="#fff" strokeWidth="1.6" />
      </svg>
      <svg viewBox="0 0 24 20" className="ml-[18px] mt-[8px] w-[24px] h-[20px] shrink-0">
        <path d="M5 18a5 5 0 0 1 0-9 7 7 0 0 1 13-1 5 5 0 0 1 1 10z" fill="#e8e8e8" />
      </svg>
      <svg viewBox="0 0 32 26" className="ml-[10px] mt-[8px] w-[32px] h-[26px] shrink-0">
        <rect x="5" y="1" width="6" height="13" rx="3" fill="none" stroke="#8fd6f0" strokeWidth="1.4" />
        <path d="M2 11a6 6 0 0 0 12 0M8 18v4" fill="none" stroke="#8fd6f0" strokeWidth="1.4" />
        <path d="M30 6l-14 6 6 2 2 7z" fill="none" stroke="#8fd6f0" strokeWidth="1.3" />
      </svg>
      <div className="ml-[14px] mt-[6px] w-[40px] text-center text-[13.5px] leading-[21px] shrink-0">
        <div>ENG</div>
        <div>IN</div>
      </div>
      <svg viewBox="0 0 20 20" className="ml-[16px] mt-[8px] w-[20px] h-[20px] shrink-0">
        <path d="M1 7a13 13 0 0 1 18 0M4 11a8.5 8.5 0 0 1 12 0M7 14a4 4 0 0 1 6 0" fill="none" stroke="#fff" strokeWidth="1.4" />
        <circle cx="10" cy="17" r="1.5" fill="#fff" />
      </svg>
      <svg viewBox="0 0 22 20" className="ml-[8px] mt-[8px] w-[22px] h-[20px] shrink-0">
        <path d="M2 7h4l5-5v16l-5-5H2z" fill="none" stroke="#fff" strokeWidth="1.3" />
        <path d="M14 6a6 6 0 0 1 0 8M17 3a10 10 0 0 1 0 14" fill="none" stroke="#aaa" strokeWidth="1.2" />
      </svg>
      <svg viewBox="0 0 20 20" className="ml-[11px] mt-[8px] w-[20px] h-[20px] shrink-0">
        <rect x="1" y="4" width="16" height="12" rx="3" fill="none" stroke="#fff" strokeWidth="1.4" />
        <rect x="3" y="6" width="6" height="8" rx="1" fill="#fff" />
        <rect x="18" y="8" width="1.5" height="4" fill="#fff" />
      </svg>
      <div className="w-[90px] mt-[3px] text-right text-[13.5px] leading-[21px] whitespace-nowrap shrink-0">
        <div>8:35 PM</div>
        <div>2/18/2025</div>
      </div>
      <svg viewBox="0 0 18 24" className="ml-[12px] mt-[8px] w-[16px] h-[22px] shrink-0">
        <path d="M9 2a6 6 0 0 0-6 6v7l-2 3h16l-2-3V8a6 6 0 0 0-6-6zM7 21h4" fill="#fff" stroke="#fff" />
        <text x="9" y="14" fontSize="9" textAnchor="middle" fill="#111" fontWeight="700" fontFamily="'Noto Sans',sans-serif">Zz</text>
      </svg>
    </div>
  );
}

export default function App() {
  const filt: [string, boolean, string, boolean][] = [
    ["All items", true, "Locked items", false],
    ["Footprints", true, "Text", true],
    ["Tracks", true, "Vias", true],
    ["Pads", true, "Graphics", true],
    ["Zones", true, "Rule Areas", true],
    ["Dimensions", true, "Other items", true],
  ];
  const menus: [string, string][] = [
    ["File", "ml-[3px]"], ["Edit", "ml-[19px]"], ["View", "ml-[17px]"], ["Place", "ml-[17px]"], ["Route", "ml-[18px]"],
    ["Inspect", "ml-[17px]"], ["Tools", "ml-[18px]"], ["Preferences", "ml-[18px]"], ["Help", "ml-[19px]"],
  ];
  return (
    <div className="relative w-[1912px] h-[1198px] overflow-hidden bg-[#8dbb26] pt-[6px] pb-[5px] pl-[3px] pr-[1px] flex flex-col text-[14.3px] font-['Noto_Sans',sans-serif]">
      <div className="flex-1 flex flex-col bg-[#f0f0f0] min-h-0">
        <div className="h-[23px] flex items-center shrink-0 bg-[#f2f2f2] text-[#8a8a8a]">
          <svg viewBox="0 0 16 18" className="w-[16px] h-[18px] shrink-0">
            <rect width="16" height="18" fill="#167a1c" />
            <path d="M5 0c0 6 6 5 8 9v9M0 8c5 0 5 5 6 10" fill="none" stroke="#7cc47f" strokeWidth="1.2" />
            <circle cx="13" cy="6" r="1.6" fill="#f5a623" />
          </svg>
          <span className="ml-[6px] whitespace-nowrap">LiPo_LED_Circuit — PCB Editor</span>
          <div className="flex-1" />
          <svg viewBox="0 0 128 14" className="w-[128px] h-[14px] mr-[19px] shrink-0">
            <path d="M0 7h12M56 3h10v10H56zM59 3V1h9v9h-2M116 1l12 12M128 1l-12 12" fill="none" stroke="#8a8a8a" strokeWidth="1" />
          </svg>
        </div>
        <div className="h-[23px] flex items-center shrink-0 bg-white text-[#666] whitespace-nowrap">
          {menus.map(([m, c]) => (
            <span key={m} className={c}>{m}</span>
          ))}
        </div>
        <div className="h-[48px] flex items-center shrink-0 pl-[4px] overflow-hidden">
          <I>{iNew}</I>
          <div className="ml-[8px]"><I>{iOpen}</I></div>
          <div className="ml-[10px]"><I>{iSave}</I></div>
          <div className="ml-[7px]"><Sep /></div>
          <div className="ml-[10px]"><I>{iBoard}</I></div>
          <div className="ml-[7px]"><Sep /></div>
          <div className="ml-[8px]"><I>{iPage}</I></div>
          <div className="ml-[10px]"><I>{iPrint}</I></div>
          <div className="ml-[9px]"><I>{iPlot}</I></div>
          <div className="ml-[8px]"><Sep /></div>
          <div className="ml-[8px]"><I>{iUndo}</I></div>
          <div className="ml-[11px]"><I>{iRedo}</I></div>
          <div className="ml-[7px]"><Sep /></div>
          <div className="ml-[11px]"><I>{iSearch}</I></div>
          <div className="ml-[6px]"><Sep /></div>
          <div className="ml-[9px]"><I>{iRefresh}</I></div>
          <div className="ml-[9px]"><I>{iZoom}</I></div>
        </div>
        <div className="h-[41px] flex items-center shrink-0 overflow-hidden text-[14px] text-[#222] pb-[3px]">
          <Select text="Track: use netclass width" cls="w-[192px] h-[28px]" />
          <div className="ml-[4px] w-[38px] h-[38px] bg-[#b3d7f3] border border-[#0f78c8] flex items-center justify-center shrink-0">
            <svg viewBox="0 0 30 32" className="w-[30px] h-[32px]">
              <path d="M3 2v22a4 4 0 0 0 4 4h16a4 4 0 0 0 4-4V2" fill="none" stroke={G} strokeWidth="2" />
              <path d="M9 13h12M9 18h12" stroke={G} strokeWidth="1.6" />
              <circle cx="15" cy="28" r="3.5" fill={B} />
            </svg>
          </div>
          <div className="ml-[5px]"><Sep /></div>
          <Select text="Via: use netclass sizes" cls="ml-[5px] w-[185px] h-[28px]" />
          <div className="ml-[6px]"><Sep /></div>
          <Select
            text={
              <>
                <span className="w-[11px] h-[11px] bg-[#c83434] border border-[#333]" />
                <span>F.Cu (PgUp)</span>
              </>
            }
            cls="ml-[6px] w-[200px] h-[28px]"
          />
        </div>
        <div className="h-[930px] flex shrink-0 min-h-0">
          <ToolCol items={leftItems} w="w-[37px]" pad="pr-[2px] pt-[1px]" />
          <Canvas />
          <ToolCol items={rightItems} w="w-[45px]" pad="pl-[4px] pr-[3px] pt-[1px]" />
          <div className="w-[5px] bg-[#dcdcdc] shrink-0" />
          <div className="w-[219px] shrink-0 flex flex-col text-[13px] text-[#222]">
            <div className="h-[26px] bg-[#b8b8b8] pl-[4px] flex items-center shrink-0 text-[14px]">Appearance</div>
            <div className="h-[35px] pb-[2px] flex items-end shrink-0 text-[14px]">
              <div className="w-[63px] h-[28px] bg-[#f4f4f4] pl-[8px] flex items-center border-t border-[#e6e6e6]">Layers</div>
              <div className="w-[60px] h-[26px] bg-[#ececec] pl-[5px] flex items-center border-x border-t border-[#dedede]">Objects</div>
              <div className="w-[58px] h-[26px] bg-[#ececec] pl-[7px] flex items-center border-r border-t border-[#dedede]">Nets</div>
            </div>
            <div className="relative h-[561px] ml-[4px] pt-[1px] w-[215px] shrink-0 text-[12.3px]">
              <div className="w-[196px] border-r border-[#fafafa]">
                {layers.map(([n, c], i) => (
                  <div key={n} className={"h-[20px] flex items-center whitespace-nowrap " + (i === 0 ? "bg-[#dcdcdc]" : "")}>
                    <span className="w-[15px] pl-[3px] shrink-0">
                      {i === 0 && (
                        <svg viewBox="0 0 6 8" className="w-[5px] h-[8px]">
                          <path d="M0 0l6 4-6 4z" fill="#3f3fe8" />
                        </svg>
                      )}
                    </span>
                    <span className="w-[13px] h-[12px] shrink-0" style={{ backgroundColor: c }} />
                    <span className="ml-[5px]"><Eye /></span>
                    <span className="ml-[6px]">{n}</span>
                  </div>
                ))}
              </div>
              <div className="absolute left-[206px] top-[20px] w-[3px] h-[493px] bg-[#8a8a8a] rounded-full" />
            </div>
            <div className="mt-[3px] ml-[9px] w-[207px] h-[22px] bg-[#fbfbfb] flex items-center pl-[8px] text-[12.4px] text-[#888] shrink-0">
              <svg viewBox="0 0 6 10" className="w-[6px] h-[10px] mr-[2px]">
                <path d="M0 0l6 5-6 5z" fill="#777" />
              </svg>
              Layer Display Options
            </div>
            <div className="h-[3px] shrink-0 mt-[2px] border-b border-[#d8d8d8]" />
            <div className="ml-[7px] mt-[12px] h-[16px] leading-[16px] shrink-0">Presets (Ctrl+Tab):</div>
            <Select text={<span className="text-[14px]">All Layers</span>} cls="ml-[7px] mt-[4px] w-[210px] h-[27px]" />
            <div className="ml-[7px] mt-[5px] h-[16px] leading-[16px] shrink-0">Viewports (Shift+Tab):</div>
            <Select text={<span className="text-[14px]">---</span>} cls="ml-[7px] mt-[4px] w-[210px] h-[26px]" />
            <div className="mt-[11px] h-[26px] bg-[#b8b8b8] pl-[4px] flex items-center shrink-0 text-[14px]">Selection Filter</div>
            <div className="pt-[7px] pl-[5px] flex flex-col text-[12.3px]">
              {filt.map(([a, ao, b, bo]) => (
                <div key={a} className="h-[20px] flex items-center">
                  <div className="w-[105px] flex items-center gap-[3px] whitespace-nowrap">
                    <Cb on={ao} />
                    <span>{a}</span>
                  </div>
                  <div className="flex items-center gap-[3px] whitespace-nowrap">
                    <Cb on={bo} />
                    <span>{b}</span>
                  </div>
                </div>
              ))}
            </div>
          </div>
        </div>
        <div className="flex-1 min-h-0" />
        <div className="h-[28px] flex border-t border-[#d6d6d6] shrink-0 text-[14px] text-[#222] whitespace-nowrap">
          <div className="w-[579px] border-r border-[#dcdcdc]" />
          <div className="w-[468px] pl-[3px] flex items-center">Z 14.61</div>
          <div className="w-[153px] pl-[3px] flex items-center border-r border-[#dcdcdc]">dist 164.8530</div>
          <div className="w-[234px] pl-[3px] flex items-center border-r border-[#dcdcdc]">grid 0.5000</div>
          <div className="w-[77px] pl-[3px] flex items-center border-r border-[#dcdcdc]">mm</div>
          <div className="w-[215px] border-r border-[#dcdcdc]" />
        </div>
        <Taskbar />
      </div>

      <Dialog />

      <div className="absolute left-[631px] top-[1110px] w-[423px] h-[29px] flex rounded-b-[6px] overflow-hidden font-bold text-[13.8px]">
        <div className="w-[304px] bg-[#22d95c] flex items-center text-[#0b3d1e] pl-[17px]">
          <svg viewBox="0 0 12 16" className="w-[12px] h-[16px] shrink-0">
            <path d="M6 0l6 7H8v9H5V7H1z" fill="#0b5a20" />
          </svg>
          <span className="ml-[34px] w-[170px] text-center whitespace-nowrap">You are screen sharing</span>
          <svg viewBox="0 0 14 16" className="ml-[43px] w-[14px] h-[16px] shrink-0">
            <path d="M7 0l7 3v5c0 4-3 7-7 8-4-1-7-4-7-8V3z" fill="#0b5a20" />
            <path d="M4 8l2.5 2.5L10.5 6" fill="none" stroke="#22d95c" strokeWidth="1.4" />
          </svg>
        </div>
        <div className="flex-1 bg-[#e32626] flex items-center text-white text-[13.4px] pl-[10px] pb-[1px] whitespace-nowrap">
          <span className="w-[11px] h-[12px] bg-white rounded-[2px] mr-[5px]" />
          Stop share
        </div>
      </div>

      <div className="absolute left-[1550px] top-[425px] w-[287px] h-[165px] bg-[#202020] border-[4px] border-[#101010] rounded-[6px] shadow-[0_2px_6px_rgba(0,0,0,0.4)]">
        <div className="ml-[90px] mt-[29px] w-[100px] h-[100px] rounded-[12px] bg-[#ab3fb5] flex items-center justify-center text-white text-[53px] leading-none">D</div>
        <div className="mt-[1px] w-[114px] h-[26px] rounded-[6px] bg-[#2a2a2a] flex items-center pl-[8px] text-white text-[14.4px] whitespace-nowrap">Deepak Kumar</div>
      </div>
    </div>
  );
}
